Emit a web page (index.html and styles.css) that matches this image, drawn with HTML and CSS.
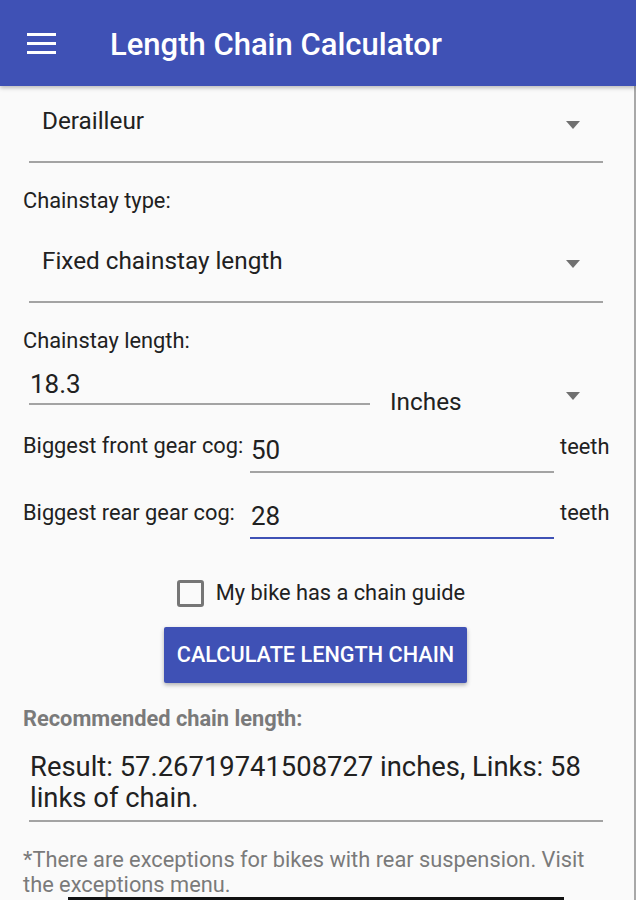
FILE: index.html
```html
<!DOCTYPE html>
<html lang="en">
<head>
  <meta charset="UTF-8" />
  <title>Length Chain Calculator</title>
  <link rel="stylesheet" href="styles.css">
</head>
<body>

  <!-- App bar -->
  <header class="appbar">
    <svg class="menu-icon" viewBox="0 0 29 21" fill="currentColor">
      <rect x="0" y="0" width="29" height="3"></rect>
      <rect x="0" y="9" width="29" height="3"></rect>
      <rect x="0" y="18" width="29" height="3"></rect>
    </svg>
    <h1>Length Chain Calculator</h1>
  </header>

  <main class="content">
    <!-- Tipo de mudança -->
    <div class="spinner spinner-first">
      <span>Derailleur</span>
      <span class="arrow"></span>
    </div>

    <p class="label label-type">Chainstay type:</p>
    <div class="spinner spinner-second">
      <span>Fixed chainstay length</span>
      <span class="arrow"></span>
    </div>

    <p class="label label-length">Chainstay length:</p>
    <div class="length-row">
      <div class="field field-length">18.3</div>
      <div class="unit-spinner">
        <span>Inches</span>
        <span class="arrow"></span>
      </div>
    </div>

    <div class="cog-row cog-front">
      <span class="label cog-label">Biggest front gear cog:</span>
      <div class="field field-cog">50</div>
      <span class="label teeth">teeth</span>
    </div>
    <div class="cog-row cog-rear">
      <span class="label cog-label">Biggest rear gear cog:</span>
      <div class="field field-cog focused">28</div>
      <span class="label teeth">teeth</span>
    </div>

    <label class="check-row">
      <span class="checkbox"></span>
      <span>My bike has a chain guide</span>
    </label>

    <div class="button-row">
      <button class="btn-calc">Calculate length chain</button>
    </div>

    <p class="result-title">Recommended chain length:</p>
    <div class="result">Result: 57.26719741508727 inches, Links: 58 links of chain.</div>

    <p class="note">*There are exceptions for bikes with rear suspension. Visit the exceptions menu.</p>
  </main>

  <div class="nav-strip"></div>

</body>
</html>
```

FILE: styles.css
```css
:root {
  --color-primary: #3f51b5;
  --color-bg: #fafafa;
  --color-text: #212121;
  --color-muted: #7a7a7a;
  --color-line: #a3a3a3;
}

* {
  box-sizing: border-box;
  margin: 0;
  padding: 0;
}
body {
  background: var(--color-bg);
  font-family: Roboto, "Noto Sans", sans-serif;
  color: var(--color-text);
  width: 636px;
  height: 900px;
  overflow: hidden;
  position: relative;
}
/* borda cinzenta à direita do ecrã */
body::after {
  content: "";
  position: absolute;
  top: 86px;
  right: 0;
  bottom: 0;
  width: 2px;
  background: #a8a8a8;
}

/* App bar */
.appbar {
  background: var(--color-primary);
  color: #fff;
  height: 86px;
  display: flex;
  align-items: center;
  padding-left: 27px;
  box-shadow: 0 2px 4px rgba(0,0,0,0.25);
  position: relative;
  z-index: 1;
}
.menu-icon {
  width: 29px;
  height: 21px;
  margin-top: 1px;
}
.appbar h1 {
  margin-left: 54px;
  padding-top: 2px;
  font-size: 31px;
  font-weight: 500;
}

/* Spinners */
.spinner {
  margin: 0 33px 0 29px;
  padding: 20px 23px 25px 13px;
  display: flex;
  align-items: center;
  justify-content: space-between;
  font-size: 24.3px;
  line-height: 30px;
  border-bottom: 2px solid var(--color-line);
}
.arrow {
  width: 0;
  height: 0;
  border-left: 7.5px solid transparent;
  border-right: 7.5px solid transparent;
  border-top: 8px solid #707070;
  margin-top: 7px;
}
.spinner-second {
  margin-top: 12px;
}

.label {
  font-size: 21.8px;
  line-height: 26px;
}
.label-type {
  margin-top: 24.5px;
  padding-left: 23px;
}
.label-length {
  margin-top: 25px;
  padding-left: 23px;
}

/* Chainstay length row */
.length-row {
  display: flex;
  align-items: flex-start;
  padding-left: 29px;
  padding-right: 33px;
}
.field {
  font-size: 26px;
  line-height: 30px;
  padding-left: 1px;
  border-bottom: 2px solid var(--color-line);
}
.field-length {
  width: 341px;
  padding-top: 15.5px;
  padding-bottom: 4px;
}
.unit-spinner {
  flex: 1;
  display: flex;
  justify-content: space-between;
  padding: 33px 23px 0 20px;
  font-size: 24.3px;
  line-height: 30px;
}
.unit-spinner .arrow {
  margin-top: 5px;
}

/* Cogs */
.cog-row {
  display: flex;
  align-items: flex-start;
  padding-left: 23px;
}
.cog-label {
  width: 227px;
  white-space: nowrap;
}
.cog-front {
  margin-top: 16px;
}
.cog-rear {
  margin-top: 27px;
}
.field-cog {
  width: 304px;
  padding-top: 2.5px;
  padding-bottom: 5.5px;
}
.cog-rear .field-cog {
  padding-top: 1.5px;
  padding-bottom: 5.5px;
}
.teeth {
  margin-left: 6px;
  padding-top: 1px;
}
.cog-rear .teeth {
  padding-top: 0;
}
.field-cog.focused {
  border-bottom: 2.5px solid var(--color-primary);
}

/* Checkbox */
.check-row {
  display: flex;
  align-items: center;
  justify-content: center;
  gap: 12px;
  margin-top: 41px;
  padding-left: 6px;
  font-size: 21.8px;
  line-height: 26px;
}
.checkbox {
  width: 27px;
  height: 27px;
  border: 3px solid #767676;
  border-radius: 3px;
}

/* Button */
.button-row {
  display: flex;
  justify-content: center;
  margin-top: 20px;
  padding-right: 5px;
}
.btn-calc {
  background: var(--color-primary);
  color: #fff;
  border: none;
  border-radius: 2px;
  width: 303px;
  height: 56px;
  font-family: Roboto, sans-serif;
  font-size: 21.7px;
  font-weight: 500;
  text-transform: uppercase;
  box-shadow: 0 2px 4px rgba(0,0,0,0.3);
}

/* Resultado */
.result-title {
  margin-top: 23.5px;
  padding-left: 23px;
  font-size: 21.8px;
  line-height: 26px;
  font-weight: 700;
  color: var(--color-muted);
}
.result {
  margin: 19.5px 33px 0 29px;
  padding-left: 1px;
  font-size: 27.4px;
  line-height: 31px;
  padding-bottom: 6px;
  border-bottom: 2px solid var(--color-line);
}
.note {
  margin-top: 25px;
  padding: 0 33px 0 23px;
  font-size: 21.8px;
  line-height: 25px;
  color: var(--color-muted);
}

.nav-strip {
  position: absolute;
  left: 68px;
  bottom: 0;
  width: 496px;
  height: 3px;
  background: #111;
}
```
